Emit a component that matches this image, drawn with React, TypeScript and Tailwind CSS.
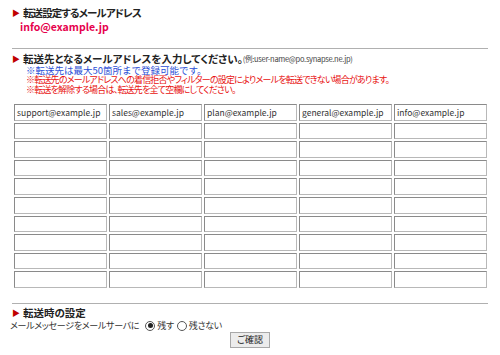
import React from "react";

const emails = [
  ["support@example.jp", "sales@example.jp", "plan@example.jp", "general@example.jp", "info@example.jp"],
];
const rows = Array.from({ length: 10 }, (_, i) => emails[i] ?? ["", "", "", "", ""]);

const font = "font-['Noto_Sans_CJK_JP',sans-serif] [font-feature-settings:'palt']";

function Heading({ children, className = "" }: { children: React.ReactNode; className?: string }) {
  return (
    <div className="flex items-center h-[14px] pl-3">
      <span className="text-[#c00000] text-[8px] leading-none mr-[3px]">&#9654;</span>
      <span className={`text-[10.5px] font-bold text-[#222] leading-[14px] ${className}`}>{children}</span>
    </div>
  );
}

function Radio({ checked }: { checked?: boolean }) {
  return (
    <span className="inline-flex items-center justify-center w-[10px] h-[10px] rounded-full border border-[#555] bg-white mr-[2px]">
      {checked && <span className="w-[5px] h-[5px] rounded-full bg-[#222]" />}
    </span>
  );
}

export default function App() {
  return (
    <div className={`w-[500px] h-[355px] bg-white overflow-hidden ${font}`}>
      {/* forward address */}
      <div className="pt-[6px]">
        <Heading className="tracking-[-0.9px]">転送設定するメールアドレス</Heading>
        <p className="pl-5 text-[10.5px] font-bold text-[#e6004c] leading-[14px]">info@example.jp</p>
      </div>

      <div className="mx-3 mt-[14px] border-t border-[#b0b0b0]" />

      {/* destination list */}
      <div className="pt-[3px]">
        <div className="flex items-center h-[14px] pl-3">
          <span className="text-[#c00000] text-[8px] leading-none mr-[3px]">&#9654;</span>
          <span className="text-[10.5px] font-bold text-[#222] leading-[14px]">転送先となるメールアドレスを入力してください。</span>
          <span className="text-[7.5px] tracking-[-0.3px] text-[#444] leading-[14px]">(例:user-name@po.synapse.ne.jp)</span>
        </div>
        <div className="pl-[26px] text-[9px] leading-[10px] -mt-[1px]">
          <p className="text-[#2b4fd6] text-[9.5px] [font-feature-settings:normal]">※転送先は最大50箇所まで登録可能です。</p>
          <p className="text-[#e8110f] tracking-[-0.8px]">※転送先のメールアドレスへの着信拒否やフィルターの設定によりメールを転送できない場合があります。</p>
          <p className="text-[#e8110f] tracking-[-0.8px]">※転送を解除する場合は、転送先を全て空欄にしてください。</p>
        </div>
      </div>

      <div className="ml-[14px] mt-[9px] w-[473px] grid grid-cols-5 gap-x-[2px] gap-y-[2px]">
        {rows.flatMap((r, i) =>
          r.map((v, j) => (
            <div
              key={`${i}-${j}`}
              className="h-[16.6px] border border-[#8a8a8a] border-b-[#b8b8b8] border-r-[#b8b8b8] bg-white px-[2px] text-[8.5px] leading-[14.6px] text-[#333] [font-feature-settings:normal]"
            >
              {v}
            </div>
          ))
        )}
      </div>

      <div className="mx-3 mt-[15px] border-t border-[#b0b0b0]" />

      {/* forward settings */}
      <div className="pt-[2px]">
        <Heading>転送時の設定</Heading>
        <div className="flex items-center pl-[10px] h-[12px] text-[9px] tracking-[-0.3px] text-[#333]">
          <span>メールメッセージをメールサーバに</span>
          <span className="ml-[6px] inline-flex items-center">
            <Radio checked />
            残す
          </span>
          <span className="ml-[3px] inline-flex items-center">
            <Radio />
            残さない
          </span>
        </div>
        <div className="flex justify-center">
          <button className="h-[16px] px-[6px] bg-[#ececec] border border-[#a8a8a8] text-[9px] leading-[14px] text-[#222]">
            ご確認
          </button>
        </div>
      </div>
    </div>
  );
}
